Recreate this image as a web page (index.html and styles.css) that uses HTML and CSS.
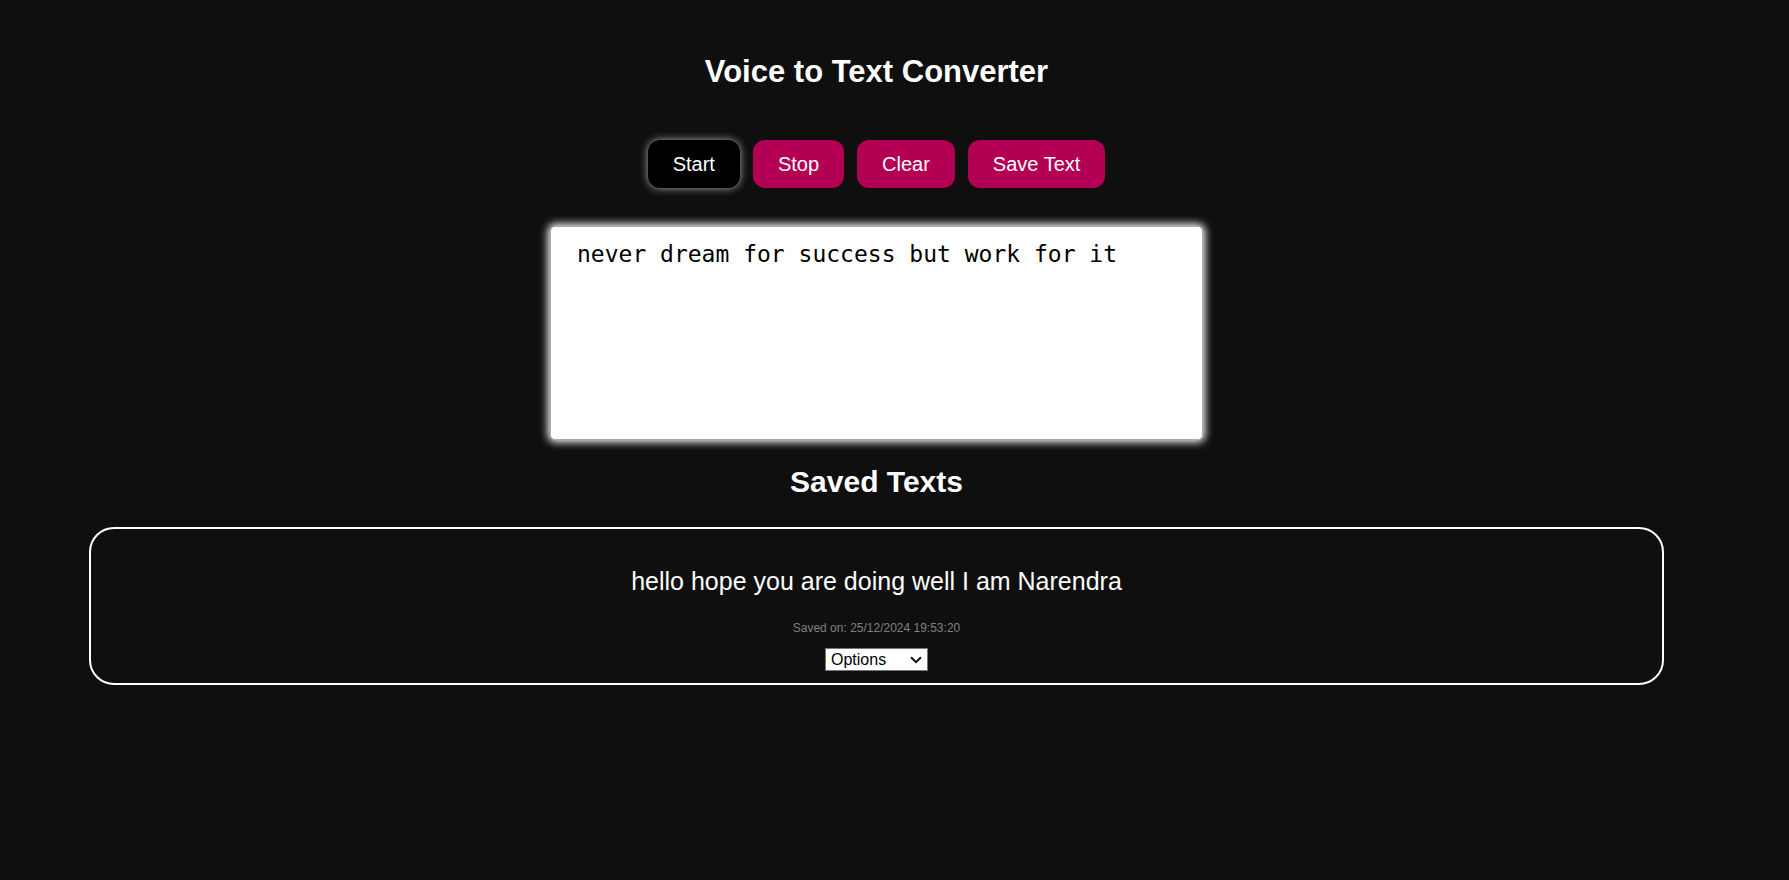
FILE: index.html
```html
<!DOCTYPE html>
<html lang="en">
<head>
<meta charset="utf-8">
<title>Voice to Text Converter</title>
<link rel="stylesheet" href="styles.css">
</head>
<body>
<main class="page">
  <h1 class="title">Voice to Text Converter</h1>
  <div class="controls">
    <button class="btn btn-active" type="button">Start</button>
    <button class="btn" type="button">Stop</button>
    <button class="btn" type="button">Clear</button>
    <button class="btn" type="button">Save Text</button>
  </div>
  <textarea class="transcript" aria-label="Transcript" spellcheck="false">never dream for success but work for it</textarea>
  <h2 class="subtitle">Saved Texts</h2>
  <article class="saved">
    <p class="saved-text">hello hope you are doing well I am Narendra</p>
    <small class="saved-date">Saved on: 25/12/2024 19:53:20</small>
    <select class="saved-options" aria-label="Options">
      <option>Options</option>
      <option>Edit</option>
      <option>Delete</option>
      <option>Download</option>
    </select>
  </article>
</main>
</body>
</html>
```
FILE: styles.css
```css
* {
  box-sizing: border-box;
}

body {
  margin: 0;
  background: #0f0f0f;
  color: #fff;
  font-family: "Liberation Sans", Arial, sans-serif;
}

.page {
  display: flex;
  flex-direction: column;
  align-items: center;
  padding: 54px 125px 40px 89px;
}

.title,
.subtitle {
  margin: 0;
  font-size: 31px;
  line-height: 36px;
  font-weight: bold;
}

.controls {
  display: flex;
  gap: 13px;
  margin: 50px 0 38px;
}

.btn {
  padding: 12px 25px;
  border: 0;
  border-radius: 12px;
  background: #b40054;
  color: #fff;
  font-family: inherit;
  font-size: 20px;
  line-height: 24px;
}

.btn-active {
  background: #000;
  box-shadow: 0 0 8px #aaa;
}

.transcript {
  display: block;
  width: 653px;
  max-width: 100%;
  height: 214px;
  padding: 12px 26px;
  border: 1px solid #aaa;
  border-radius: 5px;
  background: #fff;
  color: #000;
  box-shadow: 0 0 8px 2px #fff;
  font-family: "DejaVu Sans Mono", monospace;
  font-size: 23px;
  line-height: 30px;
  resize: none;
  outline: 0;
}

.subtitle {
  margin: 24px 0 27px;
  font-size: 30px;
}

.saved {
  display: flex;
  flex-direction: column;
  align-items: center;
  align-self: stretch;
  padding: 37px 12px 12px;
  border: 2px solid #fff;
  border-radius: 25px;
}

.saved-text {
  margin: 0 0 25px;
  font-size: 25px;
  line-height: 30px;
}

.saved-date {
  margin-bottom: 13px;
  color: #808080;
  font-size: 12px;
  line-height: 14px;
}

.saved-options {
  appearance: none;
  width: 103px;
  height: 23px;
  padding: 0 20px 0 5px;
  border: 1px solid #767676;
  border-radius: 0;
  background: #fff url("data:image/svg+xml,%3Csvg xmlns='http://www.w3.org/2000/svg' width='12' height='8' viewBox='0 0 12 8'%3E%3Cpath d='M1 1.2L6 6.2L11 1.2' fill='none' stroke='%23101010' stroke-width='2'/%3E%3C/svg%3E") no-repeat right 5px center;
  color: #000;
  font-family: inherit;
  font-size: 16px;
}
```
